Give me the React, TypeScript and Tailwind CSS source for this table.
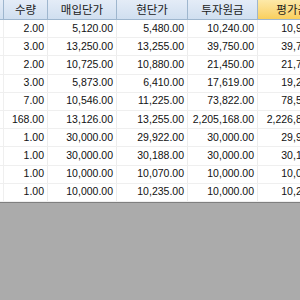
import React from "react";

const rows = [
  ["2.00", "5,120.00", "5,480.00", "10,240.00", "10,960.00"],
  ["3.00", "13,250.00", "13,255.00", "39,750.00", "39,765.00"],
  ["2.00", "10,725.00", "10,880.00", "21,450.00", "21,760.00"],
  ["3.00", "5,873.00", "6,410.00", "17,619.00", "19,230.00"],
  ["7.00", "10,546.00", "11,225.00", "73,822.00", "78,575.00"],
  ["168.00", "13,126.00", "13,255.00", "2,205,168.00", "2,226,840.00"],
  ["1.00", "30,000.00", "29,922.00", "30,000.00", "29,922.00"],
  ["1.00", "30,000.00", "30,188.00", "30,000.00", "30,188.00"],
  ["1.00", "10,000.00", "10,070.00", "10,000.00", "10,070.00"],
  ["1.00", "10,000.00", "10,235.00", "10,000.00", "10,235.00"],
];

const widths = ["w-[44px]", "w-[69px]", "w-[71px]", "w-[70px]", "w-[74px]"];
const headers = ["수량", "매입단가", "현단가", "투자원금", "평가금액"];

export default function App() {
  return (
    <div
      className="w-[300px] h-[300px] overflow-hidden bg-[#ababab] flex flex-col"
      style={{ fontFamily: '"Liberation Sans", "Noto Sans CJK KR", sans-serif' }}
    >
      <div className="w-[340px] bg-white border-b border-[#7f7f7f] flex flex-col shrink-0">
        <div className="flex h-[20px] border-b border-[#9eb6ce]">
          <div className="w-[4px] shrink-0 bg-gradient-to-b from-[#e4ecf7] to-[#d0dff0] border-r border-[#9eb6ce]" />
          {headers.map((h, i) => (
            <div
              key={i}
              className={`${widths[i]} shrink-0 flex items-center justify-center text-[11.5px] text-[#1a1a1a] border-r ${
                i === 4
                  ? "pl-[6px] bg-gradient-to-b from-[#fde9a8] to-[#f9cf5c] border-[#e0b64c]"
                  : "bg-gradient-to-b from-[#e4ecf7] to-[#d0dff0] border-[#9eb6ce]"
              }`}
              style={{ fontFamily: '"Noto Sans CJK KR", sans-serif' }}
            >
              {h}
            </div>
          ))}
        </div>
        {rows.map((r, ri) => (
          <div key={ri} className="flex h-[18.2px] border-b border-[#efefef]">
            <div className="w-[4px] shrink-0 border-r border-[#efefef]" />
            {r.map((v, ci) => (
              <div
                key={ci}
                className={`${widths[ci]} shrink-0 flex items-center justify-end pr-[3px] text-[10.5px] text-[#111] border-r border-[#ececec] whitespace-nowrap`}
              >
                {v}
              </div>
            ))}
          </div>
        ))}
      </div>
    </div>
  );
}
